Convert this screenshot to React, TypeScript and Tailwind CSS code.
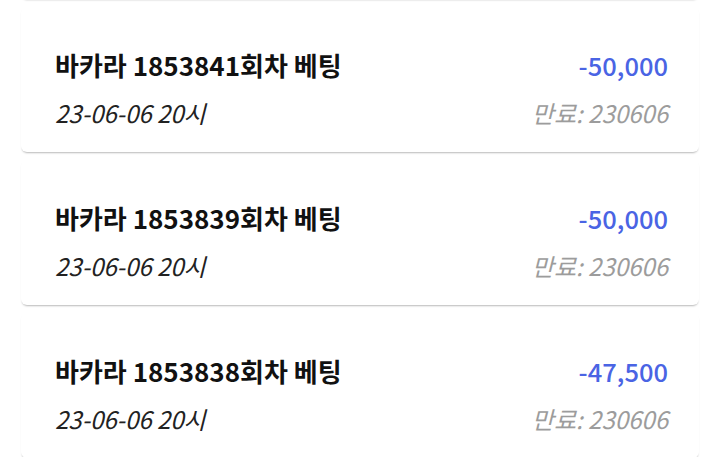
const bets = [
  { round: '1853841', amount: '-50,000' },
  { round: '1853839', amount: '-50,000' },
  { round: '1853838', amount: '-47,500' },
]

export default function App() {
  return (
    <div
      className="w-[720px] h-[457px] overflow-hidden bg-white"
      style={{ fontFamily: '"Noto Sans CJK KR", "Noto Sans", sans-serif' }}
    >
      <div className="-mt-[146px] flex flex-col gap-[8px] px-[21px]">
        {/* previous card, scrolled out of view */}
        <div className="h-[145px] bg-white rounded-[6px] shadow-[0_2px_2px_-1px_rgba(0,0,0,0.28)]" />
        {bets.map((bet) => (
          <BetCard key={bet.round} round={bet.round} amount={bet.amount} />
        ))}
      </div>
    </div>
  )
}

interface BetCardProps {
  round: string
  amount: string
}

function BetCard({ round, amount }: BetCardProps) {
  return (
    <div className="h-[145px] bg-white rounded-[6px] shadow-[0_2px_2px_-1px_rgba(0,0,0,0.28)] pl-[34px] pr-[31px] pt-[42px] flex justify-between">
      <div>
        <div className="text-[26px] leading-[32px] font-bold text-[#111]">
          바카라 {round}회차 베팅
        </div>
        <div className="mt-[16px] text-[24px] leading-[32px] italic text-[#222]">
          23-06-06 20시
        </div>
      </div>
      <div className="text-right">
        <div className="text-[25.5px] leading-[32px] font-medium text-[#4a64e4]">
          {amount}
        </div>
        <div className="mt-[16px] text-[24px] leading-[32px] italic text-[#9c9c9c]">
          만료: 230606
        </div>
      </div>
    </div>
  )
}
